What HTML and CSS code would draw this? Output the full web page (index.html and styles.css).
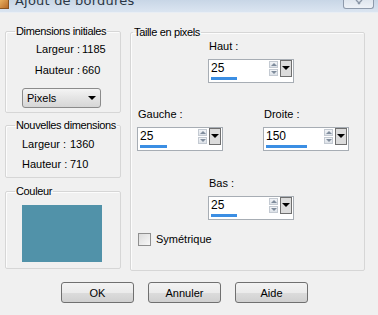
FILE: index.html
```html
<!DOCTYPE html>
<html lang="fr">
<head>
    <meta charset="UTF-8">
    <title>Ajout de bordures</title>
    <link rel="stylesheet" href="styles.css">
</head>
<body>
    <div class="titlebar">
        <span class="app-icon"></span>
        <span class="title-text">Ajout de bordures</span>
        <span class="close-btn">
            <svg width="12" height="6" viewBox="0 0 12 6"><path d="M3 0 L7 4 M9 0 L5 4" stroke="#8a96a6" stroke-width="1.4" fill="none"/></svg>
        </span>
    </div>

    <div class="main">
        <div class="left-col">
            <fieldset class="group group-init">
                <legend>Dimensions initiales</legend>
                <div class="dims dims-init">
                    <span class="lbl">Largeur :</span><span>1185</span>
                    <span class="lbl">Hauteur :</span><span>660</span>
                </div>
                <div class="select">Pixels<span class="select-arrow"></span></div>
            </fieldset>

            <fieldset class="group group-new">
                <legend>Nouvelles dimensions</legend>
                <div class="dims dims-new">
                    <span>Largeur :</span><span>1360</span>
                    <span>Hauteur :</span><span>710</span>
                </div>
            </fieldset>

            <fieldset class="group group-color">
                <legend>Couleur</legend>
                <div class="swatch"></div>
            </fieldset>
        </div>

        <fieldset class="group group-size">
            <legend>Taille en pixels</legend>

            <div class="field field-top">
                <div class="field-label">Haut :</div>
                <div class="spin">
                    <div class="spin-row">
                        <span class="spin-value">25</span>
                        <span class="spin-arrows"><i class="up"></i><i class="down"></i></span>
                        <span class="spin-drop"></span>
                    </div>
                    <div class="spin-bar" style="width: 26px"></div>
                </div>
            </div>

            <div class="field-pair">
                <div class="field">
                    <div class="field-label">Gauche :</div>
                    <div class="spin">
                        <div class="spin-row">
                            <span class="spin-value">25</span>
                            <span class="spin-arrows"><i class="up"></i><i class="down"></i></span>
                            <span class="spin-drop"></span>
                        </div>
                        <div class="spin-bar" style="width: 27px"></div>
                    </div>
                </div>
                <div class="field">
                    <div class="field-label">Droite :</div>
                    <div class="spin">
                        <div class="spin-row">
                            <span class="spin-value">150</span>
                            <span class="spin-arrows"><i class="up"></i><i class="down"></i></span>
                            <span class="spin-drop"></span>
                        </div>
                        <div class="spin-bar" style="width: 41px"></div>
                    </div>
                </div>
            </div>

            <div class="field field-bottom">
                <div class="field-label">Bas :</div>
                <div class="spin">
                    <div class="spin-row">
                        <span class="spin-value">25</span>
                        <span class="spin-arrows"><i class="up"></i><i class="down"></i></span>
                        <span class="spin-drop"></span>
                    </div>
                    <div class="spin-bar" style="width: 26px"></div>
                </div>
            </div>

            <label class="check"><span class="check-box"></span>Symétrique</label>
        </fieldset>
    </div>

    <div class="buttons">
        <button class="btn">OK</button>
        <button class="btn">Annuler</button>
        <button class="btn">Aide</button>
    </div>
</body>
</html>
```

FILE: styles.css
```css
body {
    margin: 0;
    width: 378px;
    height: 315px;
    overflow: hidden;
    background: #f0f0f0;
    font-family: "Liberation Sans", Arial, sans-serif;
    font-size: 11px;
    color: #000;
}
.titlebar {
    height: 12px;
    display: flex;
    align-items: flex-start;
    overflow: hidden;
    background: linear-gradient(#c8d6e6, #dbe5f1);
    border-bottom: 1px solid #e9eef4;
}
.app-icon {
    width: 8px;
    height: 8px;
    background: linear-gradient(135deg, #e9b060, #b86a28);
    border-right: 1px solid #8a5522;
    border-bottom: 1px solid #8a5522;
    flex: none;
}
.title-text {
    margin-left: 6px;
    margin-top: -8px;
    font-family: "DejaVu Sans", sans-serif;
    font-size: 13px;
    line-height: 17px;
    color: #2a3644;
    letter-spacing: 0.2px;
    white-space: nowrap;
}
.close-btn {
    margin-left: auto;
    margin-right: 4px;
    width: 29px;
    height: 8px;
    border: 1px solid #8e9aab;
    border-top: none;
    border-radius: 0 0 3px 3px;
    background: linear-gradient(#dfe6ee, #eef2f7);
    display: flex;
    justify-content: center;
}
.main {
    display: flex;
    gap: 9px;
    padding: 12px 0 0 5px;
}
.left-col {
    width: 116px;
    flex: none;
    display: flex;
    flex-direction: column;
}
.group {
    margin: 0;
    padding: 0;
    border: 1px solid #d6d6d6;
    box-shadow: inset 1px 1px 0 #fcfcfc;
    border-radius: 2px;
    min-width: 0;
}
.group legend {
    margin-left: 9px;
    padding: 0 1px;
    line-height: 12px;
    white-space: nowrap;
    letter-spacing: -0.35px;
}
.group-init {
    padding: 5px 0 4px;
}
.dims {
    display: grid;
    line-height: 14px;
    row-gap: 7px;
    white-space: nowrap;
}
.dims-init {
    grid-template-columns: 47px auto;
    column-gap: 2px;
    padding-left: 27px;
}
.dims-init .lbl {
    text-align: right;
}
.select {
    margin: 11px 0 0 16px;
    height: 18px;
    border: 1px solid #8b8b8b;
    border-radius: 3px;
    background: linear-gradient(#f4f4f4, #e4e4e4 50%, #d6d6d6);
    display: flex;
    align-items: center;
    padding-left: 4px;
    width: 73px;
}
.select-arrow {
    margin-left: auto;
    margin-right: 4px;
    border-left: 4px solid transparent;
    border-right: 4px solid transparent;
    border-top: 4px solid #000;
}
.group-new {
    margin-top: 6px;
    padding: 6px 0 6px;
}
.dims-new {
    grid-template-columns: 48px auto;
    row-gap: 6px;
    padding-left: 16px;
}
.group-color {
    margin-top: 7px;
    padding: 8px 0 6px;
}
.swatch {
    width: 80px;
    height: 57px;
    margin-left: 16px;
    background: #5192a9;
}
.group-size {
    width: 235px;
    height: 245px;
    box-sizing: border-box;
    margin-top: 1px;
    padding: 1px 0 0 2px;
}
.group-size legend {
    margin-left: 0;
}
.field-label {
    line-height: 14px;
    margin-bottom: 6px;
    padding-left: 1px;
}
.field-top,
.field-bottom {
    margin-left: 75px;
}
.field-pair {
    display: flex;
    gap: 40px;
    margin-top: 24px;
    padding-left: 4px;
}
.field-bottom {
    margin-top: 25px;
}
.spin {
    width: 84px;
    height: 22px;
    border: 1px solid #a7adb4;
    background: #fff;
}
.spin-row {
    display: flex;
    height: 16px;
    align-items: center;
}
.spin-value {
    padding-left: 2px;
    font-size: 12px;
    flex: 1;
}
.spin-arrows {
    width: 9px;
    display: flex;
    flex-direction: column;
    gap: 1px;
    margin-right: 2px;
}
.spin-arrows i {
    height: 7px;
    background: linear-gradient(#f2f4f7, #dde2e8);
    border: 1px solid #c4cad2;
    box-sizing: border-box;
    position: relative;
}
.spin-arrows i::after {
    content: "";
    position: absolute;
    left: 1px;
    top: 1px;
    border-left: 3px solid transparent;
    border-right: 3px solid transparent;
}
.spin-arrows .up::after {
    border-bottom: 3px solid #7f8c9c;
}
.spin-arrows .down::after {
    border-top: 3px solid #7f8c9c;
}
.spin-drop {
    width: 10px;
    height: 15px;
    margin-right: 1px;
    border: 1px solid #6f6f6f;
    background: #dcdcdc;
    display: flex;
    align-items: center;
    justify-content: center;
}
.spin-drop::after {
    content: "";
    border-left: 4px solid transparent;
    border-right: 4px solid transparent;
    border-top: 4px solid #000;
}
.spin-bar {
    height: 3px;
    margin: 1px 0 0 2px;
    background: #3b8ee3;
}
.check {
    display: flex;
    align-items: center;
    gap: 5px;
    margin-top: 12px;
    line-height: 14px;
    padding-left: 5px;
}
.check-box {
    width: 11px;
    height: 11px;
    border: 1px solid #8f8f8f;
    background: linear-gradient(135deg, #dcdcdc, #f8f8f8);
}
.buttons {
    display: flex;
    gap: 14px;
    padding-left: 61px;
    margin-top: 11px;
}
.btn {
    width: 73px;
    height: 21px;
    padding: 0;
    border: 1px solid #707070;
    border-radius: 3px;
    background: linear-gradient(#f3f3f3, #ebebeb 50%, #dcdcdc 51%, #d0d0d0);
    font-family: "Liberation Sans", Arial, sans-serif;
    font-size: 11px;
    color: #000;
}
```
